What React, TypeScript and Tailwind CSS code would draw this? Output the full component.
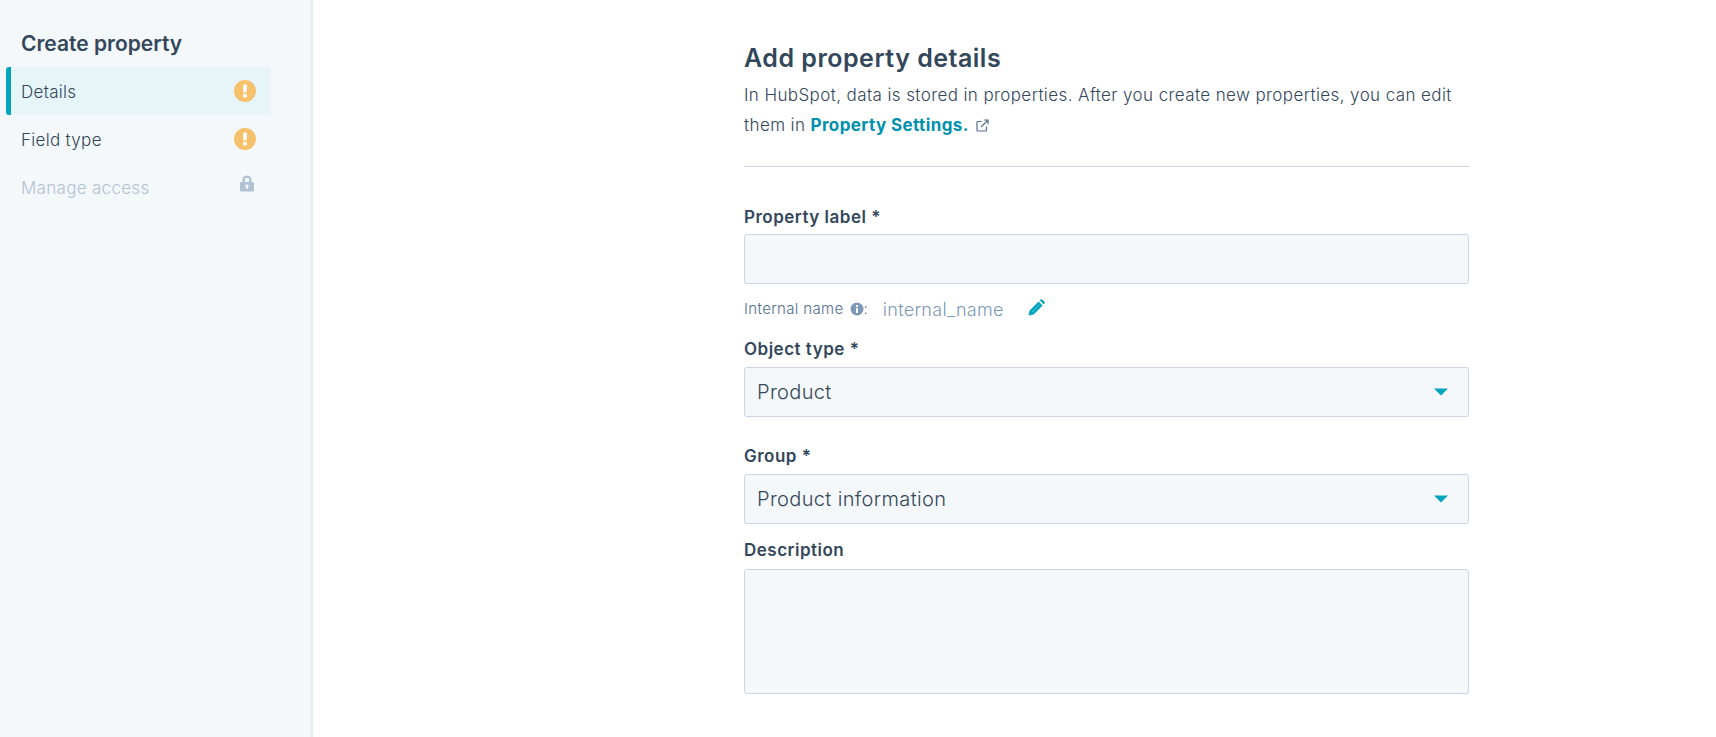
import React from "react";

const font = "font-['Inter',sans-serif]";

const WarnIcon = () => (
  <span className="flex h-[22px] w-[22px] items-center justify-center rounded-full bg-[#f5c26b]">
    <svg width="6" height="14" viewBox="0 0 6 14" fill="#fff">
      <rect x="1.2" y="0.5" width="3.6" height="8" rx="0.8" />
      <rect x="1.2" y="10" width="3.6" height="3.5" rx="0.6" />
    </svg>
  </span>
);

const LockIcon = () => (
  <svg width="16" height="17" viewBox="0 0 16 17" fill="#b0c1d4">
    <path d="M8 0.5C5.3 0.5 3.4 2.4 3.4 5v2H2.2C1.5 7 1 7.5 1 8.2v7C1 15.9 1.5 16.5 2.2 16.5h11.6c.7 0 1.2-.6 1.2-1.3v-7C15 7.5 14.5 7 13.8 7h-1.2V5C12.600 2.400 10.700.5 8 .5Zm0 2.300c1.300 0 2.200.9 2.200 2.200v2H5.800V5c0-1.300.9-2.200 2.200-2.200ZM8 9.500a1.700 1.700 0 0 1 .8 3.200v1.300H7.200v-1.300A1.700 1.700 0 0 1 8 9.500Z" />
  </svg>
);

const Caret = () => (
  <svg width="14" height="8" viewBox="0 0 14 8" fill="#00a4bd">
    <path d="M0 0.500h14L7 7.500Z" />
  </svg>
);

const SideItem = ({ label, active, disabled }: { label: string; active?: boolean; disabled?: boolean }) => (
  <div
    className={`ml-[6px] flex h-12 w-[265px] items-center justify-between rounded-[3px] pl-[15px] pr-[15px] ${
      active ? "border-l-[5px] border-[#00a4bd] !pl-[10px] bg-[#e5f5f8]" : ""
    }`}
  >
    <span className={`pt-[3px] text-[17px] tracking-[0.3px] font-light ${disabled ? "text-[#b0c1d4]" : "text-[#33475b]"}`}>{label}</span>
    {disabled ? (
      <span className="mb-[8px] mr-[1px]">
        <LockIcon />
      </span>
    ) : (
      <WarnIcon />
    )}
  </div>
);

const Label = ({ children }: { children: React.ReactNode }) => (
  <div className="text-[17px] tracking-[0.5px] leading-5 font-semibold text-[#33475b]">{children}</div>
);

const Select = ({ value }: { value: string }) => (
  <div className="mt-[8px] flex h-[50px] items-center justify-between rounded-[3px] border border-[#cbd6e2] bg-[#f5f8fa] pl-3 pr-[20px]">
    <span className="text-[20px] tracking-[0.35px] font-light text-[#33475b]">{value}</span>
    <Caret />
  </div>
);

export default function App() {
  return (
    <div className={`flex h-[737px] w-full overflow-hidden bg-white ${font}`}>
      <aside className="w-[313px] shrink-0 border-r-[3px] border-[#e8edf2] bg-[#f5f8fa] pt-[31px]">
        <h2 className="mb-[10px] pl-[21px] text-[21px] leading-[26px] font-semibold text-[#33475b]">Create property</h2>
        <SideItem label="Details" active />
        <SideItem label="Field type" />
        <SideItem label="Manage access" disabled />
      </aside>
      <main className="flex-1 pl-[431px]">
        <div className="w-[725px] pt-[43px]">
          <h1 className="text-[25px] tracking-[0.5px] leading-[30px] font-semibold text-[#33475b]">Add property details</h1>
          <p className="mt-[7px] text-[17px] tracking-[0.4px] leading-[30px] font-light text-[#33475b]">
            In HubSpot, data is stored in properties. After you create new properties, you can edit
            <br />
            them in <a className="font-bold text-[#0091ae]">Property Settings.</a>
            <svg className="ml-[7px] inline-block align-[-1px]" width="13" height="13" viewBox="0 0 13 13" fill="none" stroke="#516f90" strokeWidth="1.2">
              <path d="M5.500 2.500H2a1 1 0 0 0-1 1V11a1 1 0 0 0 1 1h7.500a1 1 0 0 0 1-1V7.500" />
              <path d="M5 8 11.500 1.500M7.800 1h4.200v4.200" />
            </svg>
          </p>
          <hr className="mt-[26px] border-t border-[#cbd6e2]" />
          <div className="mt-[40px]">
            <Label>Property label *</Label>
            <div className="mt-[7px] h-[50px] rounded-[3px] border border-[#cbd6e2] bg-[#f5f8fa]" />
          </div>
          <div className="mt-[12px] flex h-[26px] items-center">
            <span className="text-[15px] tracking-[0.35px] font-light text-[#516f90]">Internal name</span>
            <svg className="ml-[6px]" width="14" height="14" viewBox="0 0 14 14">
              <circle cx="7" cy="7" r="6.500" fill="#7c98b6" />
              <rect x="6" y="6" width="2" height="5" fill="#fff" />
              <rect x="6" y="3" width="2" height="2" fill="#fff" />
            </svg>
            <span className="text-[15px] font-light text-[#516f90]">:</span>
            <span className="ml-[15px] text-[18px] tracking-[0.3px] font-light text-[#7c98b6]">internal_name</span>
            <svg className="ml-[24px] mb-[4px]" width="17" height="17" viewBox="0 0 17 17" fill="#00a4bd">
              <path d="M0.500 16.500 1.600 11.400 10.600 2.400 14.600 6.400 5.600 15.400Z" />
              <path d="M11.700 1.300 12.300.700a1.600 1.600 0 0 1 2.200 0l1.800 1.800a1.600 1.600 0 0 1 0 2.200L15.700 5.300Z" />
              <path d="M4.200 13 11.600 5.600" stroke="#7fd1de" strokeWidth="0.8" />
            </svg>
          </div>
          <div className="mt-[17px]">
            <Label>Object type *</Label>
            <Select value="Product" />
          </div>
          <div className="mt-[29px]">
            <Label>Group *</Label>
            <Select value="Product information" />
          </div>
          <div className="mt-[16px]">
            <Label>Description</Label>
            <div className="mt-[9px] h-[125px] rounded-[3px] border border-[#cbd6e2] bg-[#f5f8fa]" />
          </div>
        </div>
      </main>
    </div>
  );
}
